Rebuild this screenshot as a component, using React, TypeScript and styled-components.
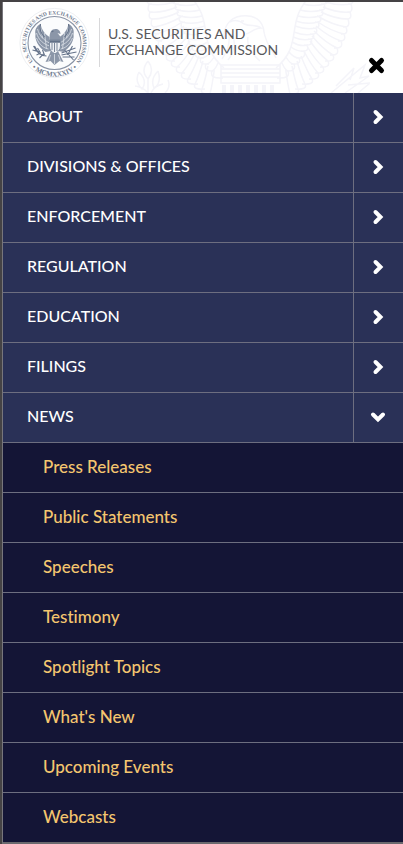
import { useState } from "react";
import styled, { createGlobalStyle } from "styled-components";

const GlobalStyle = createGlobalStyle`
  * { box-sizing: border-box; }
  body { margin: 0; background: #141536; font-family: Lato, "Open Sans", sans-serif; font-variant-ligatures: none; }
  a { color: inherit; text-decoration: none; }
  button { font: inherit; color: inherit; border: 0; background: none; padding: 0; cursor: pointer; }
`;

const line = "#6d6e80";

const Page = styled.div`
  min-height: 100vh;
  border-top: 2px solid #454345;
  border-left: 2px solid #454345;
`;

const Panel = styled.div`
  border-left: 1px solid #77767c;
  border-bottom: 2px solid #6a696e;
`;

const Header = styled.header`
  position: relative;
  display: flex;
  height: 91px;
  padding: 5px 16px 0;
  overflow: hidden;
  background: #fff;
`;

const Watermark = styled.svg`
  position: absolute;
  top: 0;
  left: 127px;
`;

const Brand = styled.a`
  position: relative;
  display: flex;
  flex: 1;
  align-items: flex-start;
  white-space: nowrap;
`;

const BrandName = styled.span`
  margin: 11px 0 0 9px;
  padding: 8px 0 9px 8px;
  border-left: 1px solid #d8d8da;
  color: #58585b;
  font-size: 14px;
  line-height: 16px;
`;

const CloseButton = styled.button`
  position: relative;
  align-self: flex-end;
  width: 20px;
  height: 20px;
  margin-bottom: 17px;
  svg { display: block; }
`;

const List = styled.ul`
  margin: 0;
  padding: 0;
  list-style: none;
`;

const MenuRow = styled.div`
  display: flex;
  height: 50px;
  border-bottom: 1px solid ${line};
  background: #2a3157;
  color: #fff;
  font-size: 16px;
  font-weight: 500;
`;

const MenuLink = styled.a`
  flex: 1;
  padding: 0 24px;
  line-height: 46px;
`;

const Toggle = styled.button`
  display: flex;
  align-items: center;
  justify-content: center;
  width: 50px;
  padding: 0 2px 2px 0;
  border-left: 1px solid ${line};
`;

const Chevron = styled.svg<{ $open: boolean }>`
  transform: rotate(${(p) => (p.$open ? 90 : 0)}deg);
`;

const SubLink = styled.a`
  display: block;
  height: 50px;
  padding: 0 40px;
  border-bottom: 1px solid ${line};
  background: #141536;
  color: #f4c66f;
  font-size: 17px;
  font-weight: 500;
  line-height: 48px;
`;

const SubItem = styled.li`
  &:last-child ${SubLink} { height: 49px; border-bottom: 0; }
`;

const sections = ["ABOUT", "DIVISIONS & OFFICES", "ENFORCEMENT", "REGULATION", "EDUCATION", "FILINGS", "NEWS"];
const news = ["Press Releases", "Public Statements", "Speeches", "Testimony", "Spotlight Topics", "What's New", "Upcoming Events", "Webcasts"];

const Seal = () => (
  <svg width="71" height="72" viewBox="-35.5 -36 71 72" role="img" aria-label="SEC seal">
    <defs>
      <path id="ring-top" d="M-20 20.3A28.5 28.5 0 1 1 20 20.3" />
      <path id="ring-bottom" d="M-25 22.5A33.6 33.6 0 0 0 25 22.5" />
    </defs>
    <circle r="34.6" fill="none" stroke="#eef0f3" strokeWidth="1" />
    <g fill="#6f7b90" fontFamily="Liberation Serif, serif" fontWeight="700">
      <text fontSize="5.500"><textPath href="#ring-top" startOffset="50%" textAnchor="middle">U.S. SECURITIES AND EXCHANGE COMMISSION</textPath></text>
      <text fontSize="7"><textPath href="#ring-bottom" startOffset="50%" textAnchor="middle">• MCMXXXIV •</textPath></text>
    </g>
    <circle r="26.5" fill="#fbfcfd" stroke="#8993a5" strokeWidth="1.1" />
    <g fill="#8b96a8">
      <path d="M-5-6C-10-9-13-14-14-19C-18-17-20-13-19-9C-20-3-16 4-9 9L-4 8Z" />
      <path d="M5-6C10-9 13-14 14-19C18-17 20-13 19-9C20-3 16 4 9 9L4 8Z" />
      <path d="M-5-5C-5-11-3-14 1-14C4-14 6-12 6-9L3-10C6-7 7-4 6 2L3 10H-4Z" />
      <path d="M-4 9L-9 19L-4 18L0 22L5 18L9 19L4 9Z" />
    </g>
    <g fill="none" stroke="#dde2e9" strokeWidth=".8">
      <path d="M-17-14C-15-7-11-3-5 0M-18-10C-16-3-11 1-5 3M-18-5C-15 2-11 5-6 6M17-14C15-7 11-3 5 0M18-10C16-3 11 1 5 3M18-5C15 2 11 5 6 6M-14-17L-12-5M14-17L12-5M-10-10L-8 6M10-10L8 6M-4 12L-6 18M0 11V21M4 12L6 18" />
    </g>
    <path d="M-5-3H6V3C6 7 3 9 .5 11C-3 9-5 7-5 3Z" fill="#eef0f4" stroke="#718096" strokeWidth=".8" />
    <path d="M-4.500-1.500H5.500" stroke="#627087" strokeWidth="2.500" />
    <path d="M-2.500 0V7M0 0V9M2.500 0V8" stroke="#7b879a" strokeWidth="1" />
    <g fill="none" stroke="#65738a" strokeWidth="1.100">
      <path d="M-8 13C-14 13-18 9-21 3M-20 3L-17 8M-22 7L-15 9M-18 12L-14 10M-15 15L-11 11M-17 5L-14 10M-12 7L-10 12" />
      <path d="M7 10L21 5M7 12L22 9M8 14L20 14M10 7L19 17M18 3L13 12" />
      <path d="M-3-11L-1-12M-14-19C-15-15-14-10-10-6M14-19C15-15 14-10 10-6" />
    </g>
  </svg>
);

type Curve = [number, number][];

const wingInner: Curve = [[314, -8], [282, 22], [306, 42], [276, 68]];
const wingMiddle: Curve = [[330, -8], [314, 22], [318, 44], [280, 78]];
const wingOuter: Curve = [[352, -12], [352, 34], [330, 74], [282, 98]];

const along = (c: Curve, t: number) => {
  const u = 1 - t;
  const w = [u * u * u, 3 * u * u * t, 3 * u * t * t, t * t * t];
  return [0, 1].map((axis) => Math.round(c.reduce((sum, p, i) => sum + p[axis] * w[i], 0)));
};

const plumes = (from: Curve, to: Curve, count: number) =>
  Array.from({ length: count }, (_, i) => {
    const a = along(from, i / count);
    const b = along(to, i / count);
    const c = along(to, (i + 1) / count);
    const mx = Math.round((a[0] + b[0]) / 2);
    const my = Math.round((a[1] + b[1]) / 2) + 3;
    return `M${a[0]} ${a[1]}Q${mx} ${my} ${b[0]} ${b[1]}Q${b[0] + 3} ${c[1] + 1} ${c[0] - 3} ${c[1]}`;
  }).join("");

const wing = plumes(wingInner, wingMiddle, 14) + plumes(wingMiddle, wingOuter, 17);

const EagleMark = () => (
  <Watermark width="240" height="91" viewBox="130 2 240 91" fill="none" stroke="#f4f4f9" strokeWidth="1.500" aria-hidden="true">
    <path d={wing} />
    <path d="M314-8C282 22 306 42 276 68" />
    <g transform="translate(500 0) scale(-1 1)">
      <path d={wing} />
      <path d="M314-8C282 22 306 42 276 68" />
    </g>
    <path d="M224 40C223 27 229 18 241 16C255 14 263 21 264 32C266 44 272 50 276 58M230 22C235 19 239 20 244 24C251 27 257 24 261 28C254 28 251 33 246 34M241 21h3M228 30C231 40 229 49 222 59M232 34C237 45 234 53 228 60M248 37C246 47 253 55 260 61" />
    <path d="M221 65H280V83H221ZM221 69H280M221 73H280M221 77H280" />
    <path d="M224 85V93M232 85V93M240 85V93M248 85V93M256 85V93M264 85V93M272 85V93" strokeWidth="4" />
    <path d="M148 61q-8 10 0 18q7-9 0-18M139 72q-5 9 3 17q6-8-3-17M158 71q-8 8-4 17q8-5 4-17M148 79V93M135 86q8 1 13 7M163 84q-9 2-12 9M168 80q3 7-3 13" />
    <path d="M331 93L365 65L360 78L369 76L345 93M336 86L354 68L350 80M348 85L370 83L358 93" />
  </Watermark>
);

export default function App() {
  const [open, setOpen] = useState<string | null>("NEWS");
  return (
    <>
      <GlobalStyle />
      <Page>
        <Panel>
          <Header>
            <EagleMark />
            <Brand href="#home">
              <Seal />
              <BrandName>U.S. SECURITIES AND<br />EXCHANGE COMMISSION</BrandName>
            </Brand>
            <CloseButton aria-label="Close menu">
              <svg width="20" height="20" viewBox="0 0 20 20">
                <path d="M4.500 4.500L14.500 14.500M14.500 4.500L4.500 14.500" stroke="#000" strokeWidth="5" strokeLinecap="round" />
              </svg>
            </CloseButton>
          </Header>
          <nav aria-label="Main">
            <List>
              {sections.map((name) => (
                <li key={name}>
                  <MenuRow>
                    <MenuLink href="#section">{name}</MenuLink>
                    <Toggle aria-label={`Toggle ${name}`} aria-expanded={open === name} onClick={() => setOpen(open === name ? null : name)}>
                      <Chevron $open={open === name} width="18" height="18" viewBox="0 0 18 18">
                        <path d="M6.500 4L11.500 9L6.500 14" fill="none" stroke="#fff" strokeWidth="4" strokeLinecap="round" />
                      </Chevron>
                    </Toggle>
                  </MenuRow>
                  {name === "NEWS" && open === name && (
                    <List>
                      {news.map((item) => (
                        <SubItem key={item}><SubLink href="#news">{item}</SubLink></SubItem>
                      ))}
                    </List>
                  )}
                </li>
              ))}
            </List>
          </nav>
        </Panel>
      </Page>
    </>
  );
}
